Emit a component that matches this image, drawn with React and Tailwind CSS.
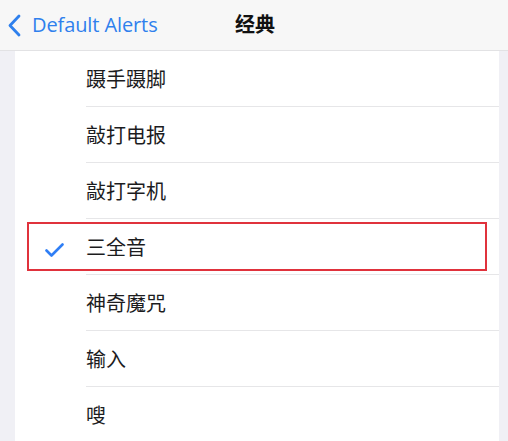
import React from "react";

const font = { fontFamily: '"Noto Sans CJK SC", "Noto Sans", Inter, sans-serif' };

const items = ["蹑手蹑脚", "敲打电报", "敲打字机", "三全音", "神奇魔咒", "输入", "嗖"];

export default function App() {
  return (
    <div className="w-[508px] h-[441px] overflow-hidden bg-[#f0f0f5] flex flex-col" style={font}>
      <header className="h-[51px] shrink-0 bg-[#f7f7f7] border-b border-[#e2e2e4] relative flex items-center">
        <div className="flex items-center pl-[7px] gap-[11px] text-[#2f80ed]">
          <svg width="14" height="23" viewBox="0 0 14 23" fill="none">
            <path d="M12 2 L3 11.5 L12 21" stroke="#2f80ed" strokeWidth="2.8" strokeLinecap="round" strokeLinejoin="round" />
          </svg>
          <span className="text-[20px] leading-none tracking-[-0.1px]" style={{ fontFamily: '"Open Sans", Inter, sans-serif' }}>Default Alerts</span>
        </div>
        <div className="absolute left-[235px] top-[10px] text-[20px] font-bold text-[#111] leading-[28px]">经典</div>
      </header>
      <div className="flex-1 flex pl-[15px] pr-[9px]">
        <div className="flex-1 bg-white flex flex-col">
          {items.map((t, i) => (
            <div key={t} className="h-[56px] shrink-0 relative flex items-center">
              {i === 3 && (
                <svg className="absolute left-[30px] top-[24px]" width="19" height="14" viewBox="0 0 19 14" fill="none">
                  <path d="M1.5 7.5 L6.5 12.5 L17.5 1.5" stroke="#2f7ef5" strokeWidth="2.6" strokeLinecap="round" strokeLinejoin="round" />
                </svg>
              )}
              <span className="pl-[71px] text-[20px] text-[#1c1c1e] leading-none">{t}</span>
              {i < items.length - 1 && (
                <div className="absolute left-[71px] right-0 bottom-0 h-px bg-[#e6e6e8]" />
              )}
              {i === 3 && (
                <div className="absolute left-[12px] right-[12px] top-[3px] bottom-[4px] border-2 border-[#e0323c]" />
              )}
            </div>
          ))}
        </div>
      </div>
    </div>
  );
}
